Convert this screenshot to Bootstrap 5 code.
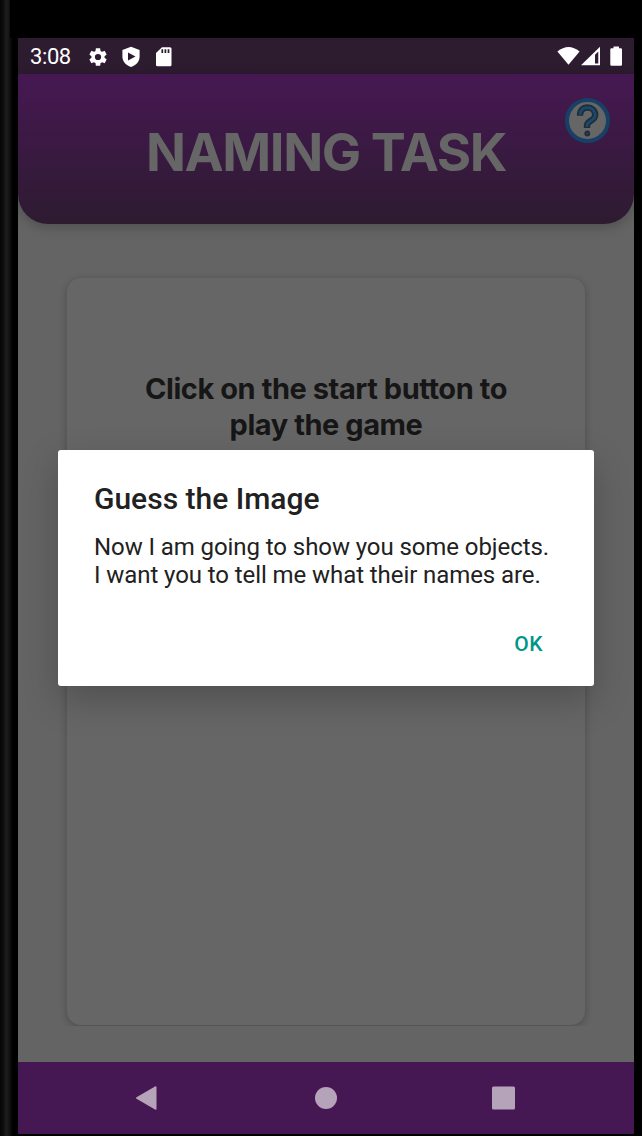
<!DOCTYPE html>
<html lang="en">
<head>
<meta charset="utf-8">
<meta name="viewport" content="width=device-width, initial-scale=1">
<title>Naming Task</title>
<link href="https://cdn.jsdelivr.net/npm/bootstrap@5.3.0/dist/css/bootstrap.min.css" rel="stylesheet">
<style>
  body { background: #000; font-family: Roboto, "Liberation Sans", sans-serif; }
  .device { width: 642px; height: 1136px; padding: 38px 8px 2px 18px;
    background: linear-gradient(90deg, #050505 0, #0c0c0c 3px, #1c1c1c 6px, #191919 8px, #090909 11px, #000 13px); }
  .device::before { content: ""; position: absolute; inset: 0 0 auto 10px; height: 38px; background: #000; }
  .screen { height: 1096px; background: #646464; }
  .status { height: 36px; background: #2d1b2f; padding: 1px 11px 0 12px; }
  .clock { font-size: 22px; line-height: 36px; width: 57px; letter-spacing: -.4px; }
  .shield { margin-left: 12px; }
  .sdcard { margin-left: 14px; }
  .hero { height: 150px; border-radius: 0 0 30px 30px; background: linear-gradient(#461853, #2d1b30);
    box-shadow: 0 3px 12px rgba(0,0,0,.22); }
  .hero h1 { font: 700 52.5px/60px Inter, sans-serif; color: #666; letter-spacing: -1.4px; padding-top: 6px; }
  .help { top: 23px; right: 23px; width: 47px; height: 47px; }
  .stage { padding: 54px 49px 0; height: 802px; overflow: hidden; }
  .panel { height: 747px; border-radius: 14px; background: #666; box-shadow: 0 2px 7px 1px rgba(0,0,0,.2); padding-top: 93px; }
  .panel p { font: 700 29px/36px Inter, sans-serif; color: #161616; letter-spacing: -.44px; }
  .navkeys { height: 72px; background: #461853; }
  .dialog-box { left: 40px; top: 412px; width: 536px; height: 236px; border-radius: 3px; padding: 31px 36px 0;
    box-shadow: 0 14px 36px rgba(0,0,0,.22); color: #212121; }
  .dialog-box h2 { font-size: 30px; font-weight: 500; line-height: 36px; margin-bottom: 16px; }
  .dialog-box p { font-size: 24px; line-height: 28px; letter-spacing: -.08px; margin-bottom: 42px; white-space: nowrap; }
  .ok { font-size: 21px; line-height: 26px; font-weight: 500; color: #009688; letter-spacing: .5px; margin-right: 15px; }
</style>
</head>
<body>
<div class="device position-relative overflow-hidden">
  <div class="screen position-relative d-flex flex-column overflow-hidden">
    <div class="status d-flex align-items-center text-white flex-shrink-0">
      <span class="clock">3:08</span>
      <svg width="22" height="22" viewBox="0 0 24 24" fill="#fff"><path d="M19.14 12.94a7 7 0 0 0 0-1.88l2.03-1.58a.5.5 0 0 0 .12-.61l-1.92-3.32a.5.5 0 0 0-.59-.22l-2.39.96a7 7 0 0 0-1.62-.94l-.36-2.54a.48.48 0 0 0-.48-.41h-3.84a.48.48 0 0 0-.47.41l-.36 2.54c-.59.24-1.13.57-1.62.94l-2.39-.96a.48.48 0 0 0-.59.22L2.74 8.87a.48.48 0 0 0 .12.61l2.03 1.58a7 7 0 0 0 0 1.88l-2.03 1.58a.5.5 0 0 0-.12.61l1.92 3.32c.12.22.37.29.59.22l2.39-.96c.5.38 1.03.7 1.62.94l.36 2.54c.05.24.24.41.48.41h3.84c.24 0 .44-.17.47-.41l.36-2.54c.59-.24 1.13-.56 1.62-.94l2.39.96c.22.08.47 0 .59-.22l1.92-3.32a.48.48 0 0 0-.12-.61zM12 15.400a3.400 3.400 0 1 1 0-6.800 3.400 3.400 0 0 1 0 6.800z"/></svg>
      <svg class="shield" width="20" height="22" viewBox="0 0 20 22"><path d="M10 .8 18.600 4v6.500c0 5-3.400 8.800-8.600 10.500C4.800 19.300 1.400 15.500 1.400 10.500V4z" fill="#fff"/><path d="M7 6.500v8l7.500-4z" fill="#2d1b2f"/></svg>
      <svg class="sdcard" width="20" height="22" viewBox="0 0 20 22"><path d="M7 1.300h8q1.500 0 1.500 1.500v16q0 1.500-1.500 1.500H2.500Q1 20.300 1 18.800V7z" fill="#fff"/><path d="M7.300 3.200v3.800m3.100-3.800v3.800m3.100-3.800v3.800" stroke="#2d1b2f" stroke-width="1.700"/></svg>
      <svg class="ms-auto" width="66" height="22" viewBox="0 0 66 22"><path d="M.4 5.500Q11.500-3.700 22.600 5.500L11.500 18.800z" fill="#fff"/><path d="M24 19.300 43 .8v18.500z" fill="#fff"/><path d="M38 8.700 41.300 5.500v12h-3.300z" fill="#2d1b2f"/><path d="M56.500.5h5.500v1.800h1.800q1.200 0 1.200 1.200v15q0 1.300-1.200 1.300h-9.300q-1.200 0-1.200-1.300v-15q0-1.200 1.200-1.200h2z" fill="#fff"/></svg>
    </div>
    <header class="hero position-relative d-flex align-items-center justify-content-center flex-shrink-0">
      <h1 class="m-0">NAMING TASK</h1>
      <svg class="help position-absolute" viewBox="0 0 47 47"><circle cx="23.500" cy="23.500" r="20.500" fill="#666" stroke="#184065" stroke-width="4"/><path d="M16 18.800c0-5.600 3.200-8.300 7.500-8.300s7.700 3 7.700 7.500c0 5.800-8.200 5.700-8.200 10.500v2.500" fill="none" stroke="#222e36" stroke-width="6.400"/><path d="M16 17.500c.3-4.600 3.500-7 7.500-7s7.700 3 7.700 7.500c0 5.800-8.200 5.700-8.200 10.500v1.200" fill="none" stroke="#184a73" stroke-width="2.700"/><circle cx="23.300" cy="36.500" r="2.900" fill="#222e36"/><circle cx="23.300" cy="36.500" r="1" fill="#184a73"/></svg>
    </header>
    <main class="stage flex-shrink-0">
      <div class="panel text-center"><p class="m-0">Click on the start button to<br>play the game</p></div>
    </main>
    <footer class="navkeys mt-auto flex-shrink-0 d-flex justify-content-center align-items-center">
      <svg width="382" height="26" viewBox="0 0 382 26" fill="#b5a3ba"><path d="M1.500 12.300 20 1.400q1.500-.8 1.500.9v21.400q0 1.700-1.500.9L1.500 13.700q-1.200-.7 0-1.400z"/><circle cx="191" cy="13" r="11"/><rect x="357" y="1.500" width="23" height="23" rx="1.500"/></svg>
    </footer>
    <section class="dialog-box position-absolute bg-white d-flex flex-column" role="dialog">
      <h2>Guess the Image</h2>
      <p>Now I am going to show you some objects.<br>I want you to tell me what their names are.</p>
      <button type="button" class="ok btn p-0 border-0 align-self-end">OK</button>
    </section>
  </div>
</div>
<script src="https://cdn.jsdelivr.net/npm/bootstrap@5.3.0/dist/js/bootstrap.bundle.min.js"></script>
</body>
</html>
